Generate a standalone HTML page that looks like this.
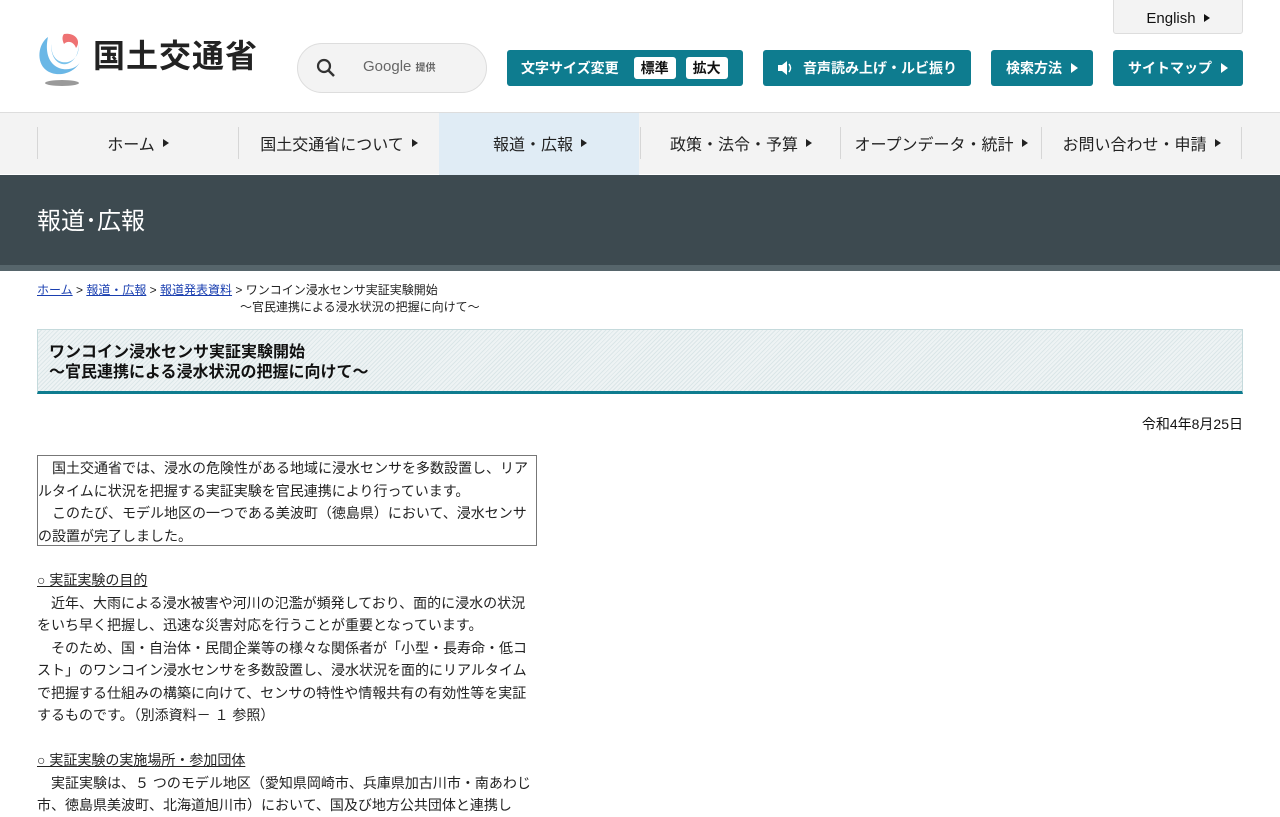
<!DOCTYPE html>
<html><head><meta charset="utf-8"><style>
*{margin:0;padding:0;box-sizing:border-box}
body{width:1280px;height:800px;overflow:hidden;background:#fff;font-family:"Liberation Sans","Noto Sans CJK JP",sans-serif;color:#111;position:relative}
.a{position:absolute}
.btn{position:absolute;top:50px;height:36px;background:#0e7c8f;color:#fff;border-radius:3px;font-size:14px;font-weight:bold;display:flex;align-items:center;justify-content:center;white-space:nowrap}
.tri{display:inline-block;width:0;height:0;border-top:5px solid transparent;border-bottom:5px solid transparent;border-left:7px solid currentColor;margin-left:9px}
.nav{position:absolute;top:112px;height:62px;width:1280px;background:#f3f3f3;border-top:1px solid #ddd}
.ni{position:absolute;top:14px;height:32px;width:201px;border-left:1px solid #d6d6d6;font-size:16px;display:flex;align-items:center;justify-content:center;color:#222}
.ni .tri{border-top-width:4px;border-bottom-width:4px;border-left-width:6px;margin-left:8px}
.body{font-family:"Liberation Sans","Noto Sans CJK JP",sans-serif;font-size:14px;line-height:22.5px;color:#222}
</style></head><body>
<svg class="a" style="left:36px;top:32px" width="52" height="56" viewBox="0 0 52 56">
<path d="M12 5 C2 12 0 30 10 38 C20 46 38 42 44 30 C40 38 26 40 18 33 C10 26 10 14 12 5Z" fill="#6ab7e6"/>
<path d="M16 12 C14 24 22 32 32 30 C40 28 44 20 42 12 C44 22 36 34 26 32 C18 30 14 20 16 12Z" fill="#7bc3ec"/>
<path d="M28 2 C38 0 46 8 40 16 C38 10 32 8 28 12 C26 8 26 4 28 2Z" fill="#ee7273"/>
<ellipse cx="26" cy="51" rx="17" ry="3" fill="#9a9a9a"/>
</svg>
<div class="a" style="left:93px;top:36px;font-size:32px;font-weight:bold;color:#222;letter-spacing:1px;line-height:40px">国土交通省</div>
<div class="a" style="left:297px;top:43px;width:190px;height:50px;border:1px solid #ddd;border-radius:25px;background:#f3f3f3"></div>
<svg class="a" style="left:315px;top:57px" width="22" height="22" viewBox="0 0 22 22"><circle cx="9" cy="9" r="6" fill="none" stroke="#333" stroke-width="2.2"/><path d="M13.5 13.5 L19 19" stroke="#333" stroke-width="2.5"/></svg>
<div class="a" style="left:363px;top:58px;font-size:15px;color:#666">Google <span style="font-size:10px;font-weight:bold">提供</span></div>
<div class="a" style="left:1113px;top:-2px;width:130px;height:36px;background:#f3f3f3;border:1px solid #ddd;border-radius:0 0 3px 3px;font-size:15px;display:flex;align-items:center;justify-content:center;color:#111;padding-top:4px">English<span class="tri" style="border-top-width:4px;border-bottom-width:4px;border-left-width:6px;margin-left:8px"></span></div>
<div class="btn" style="left:507px;width:236px;justify-content:flex-start;padding-left:14px">文字サイズ変更<span style="background:#fff;color:#111;border-radius:3px;padding:0 7px;margin-left:15px;line-height:22px">標準</span><span style="background:#fff;color:#111;border-radius:3px;padding:0 7px;margin-left:10px;line-height:22px">拡大</span></div>
<div class="btn" style="left:763px;width:208px"><svg width="18" height="16" viewBox="0 0 18 16" style="margin-right:8px"><path d="M1 5h4l5-4v14l-5-4H1z" fill="#fff"/><path d="M12 4q3 4 0 8" stroke="#fff" fill="none" stroke-width="1.5"/></svg>音声読み上げ・ルビ振り</div>
<div class="btn" style="left:991px;width:102px">検索方法<span class="tri"></span></div>
<div class="btn" style="left:1113px;width:130px">サイトマップ<span class="tri"></span></div>
<div class="nav">
<div class="a" style="left:439px;top:0;width:200px;height:62px;background:#e0ecf5"></div>
<div class="ni" style="left:37px">ホーム<span class="tri"></span></div>
<div class="ni" style="left:238px">国土交通省について<span class="tri"></span></div>
<div class="ni" style="left:439px;border-left-color:transparent">報道・広報<span class="tri"></span></div>
<div class="ni" style="left:640px">政策・法令・予算<span class="tri"></span></div>
<div class="ni" style="left:840px">オープンデータ・統計<span class="tri"></span></div>
<div class="ni" style="left:1041px;border-right:1px solid #d6d6d6">お問い合わせ・申請<span class="tri"></span></div>
</div>
<div class="a" style="top:175px;left:0;width:1280px;height:90px;background:#3d4a50"></div>
<div class="a" style="top:265px;left:0;width:1280px;height:6px;background:#56656b"></div>
<div class="a" style="top:206px;left:37px;color:#fff;font-size:24px;line-height:32px">報道･広報</div>
<div class="a" style="top:282px;left:37px;font-size:12px;line-height:17px;color:#222">
<span style="color:#1a3fb0;text-decoration:underline">ホーム</span> &gt; <span style="color:#1a3fb0;text-decoration:underline">報道・広報</span> &gt; <span style="color:#1a3fb0;text-decoration:underline">報道発表資料</span> &gt; ワンコイン浸水センサ実証実験開始<br><span style="padding-left:203px">～官民連携による浸水状況の把握に向けて～</span></div>
<div class="a" style="top:329px;left:37px;width:1206px;height:65px;border:1px solid #c5dadc;border-bottom:3px solid #0e7c8f;background:repeating-linear-gradient(135deg,#eef3f4 0,#eef3f4 2px,#dbe6e8 2px,#dbe6e8 3px)"></div>
<div class="a" style="top:343px;left:49px;font-size:16px;font-weight:bold;line-height:20px;color:#111">ワンコイン浸水センサ実証実験開始<br>～官民連携による浸水状況の把握に向けて～</div>
<div class="a" style="top:414px;right:37px;font-size:14px">令和4年8月25日</div>
<div class="a body" style="top:455px;left:37px;width:500px;height:91px;border:1px solid #777;padding-top:1px;white-space:nowrap">　国土交通省では、浸水の危険性がある地域に浸水センサを多数設置し、リア<br>ルタイムに状況を把握する実証実験を官民連携により行っています。<br>　このたび、モデル地区の一つである美波町（徳島県）において、浸水センサ<br>の設置が完了しました。</div>
<div class="a body" style="top:569px;left:37px;width:520px;white-space:nowrap">
<span style="text-decoration:underline">○ 実証実験の目的</span><br>
　近年、大雨による浸水被害や河川の氾濫が頻発しており、面的に浸水の状況<br>
をいち早く把握し、迅速な災害対応を行うことが重要となっています。<br>
　そのため、国・自治体・民間企業等の様々な関係者が「小型・長寿命・低コ<br>
スト」のワンコイン浸水センサを多数設置し、浸水状況を面的にリアルタイム<br>
で把握する仕組みの構築に向けて、センサの特性や情報共有の有効性等を実証<br>
するものです。（別添資料－ １ 参照）<br><br>
<span style="text-decoration:underline">○ 実証実験の実施場所・参加団体</span><br>
　実証実験は、５ つのモデル地区（愛知県岡崎市、兵庫県加古川市・南あわじ<br>
市、徳島県美波町、北海道旭川市）において、国及び地方公共団体と連携し<br>
</div>
</body></html>
